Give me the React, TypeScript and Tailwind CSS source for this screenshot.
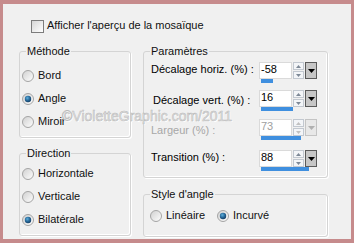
import React, { useId } from "react";

const Radio = ({ checked }: { checked?: boolean }) => {
  const id = useId().replace(/:/g, "");
  return (
    <svg width="12" height="12" viewBox="0 0 12 12" className="shrink-0">
      <defs>
        <linearGradient id={`g${id}`} x1="0" y1="0" x2="1" y2="1">
          <stop offset="0" stopColor="#cfcfcf" />
          <stop offset="1" stopColor="#ffffff" />
        </linearGradient>
        <radialGradient id={`d${id}`} cx="40%" cy="35%" r="70%">
          <stop offset="0" stopColor="#5fb0dc" />
          <stop offset="0.5" stopColor="#2a6d9e" />
          <stop offset="1" stopColor="#123a60" />
        </radialGradient>
      </defs>
      <circle cx="6" cy="6" r="5.5" fill={`url(#g${id})`} stroke="#a4a4a4" strokeWidth="1" />
      {checked && <circle cx="6" cy="6" r="3.2" fill={`url(#d${id})`} />}
    </svg>
  );
};

const RadioRow = ({ label, checked }: { label: string; checked?: boolean }) => (
  <div className="flex h-[23px] items-center gap-[4px]">
    <Radio checked={checked} />
    <span>{label}</span>
  </div>
);

const GroupBox = ({
  title,
  className,
  children,
}: {
  title: string;
  className: string;
  children: React.ReactNode;
}) => (
  <div
    className={`relative rounded-[3px] border border-[#d4d4d4] shadow-[inset_-1px_-1px_0_#ffffff,1px_1px_0_#ffffff] ${className}`}
  >
    <span className="absolute left-[6px] top-[-7px] bg-[#f0f0f0] px-[1px] leading-[13px]">{title}</span>
    {children}
  </div>
);

const Tri = ({ up, color }: { up?: boolean; color: string }) => (
  <svg width="5" height="3" viewBox="0 0 5 3">
    <polygon points={up ? "0,3 5,3 2.5,0" : "0,0 5,0 2.5,3"} fill={color} />
  </svg>
);

const Spin = ({
  value,
  pct,
  disabled,
}: {
  value: string;
  pct: number;
  disabled?: boolean;
}) => (
  <div className="flex flex-col">
    <div className="flex h-[17px]">
      <div
        className={`w-[33px] border border-[#dadada] bg-white pl-[1px] pt-[1px] leading-[10px] ${
          disabled ? "text-[#a0a0a0]" : "text-black"
        }`}
      >
        {value}
      </div>
      <div className="ml-[1px] flex w-[11px] flex-col gap-[1px]">
        <div className="flex flex-1 items-center justify-center border border-[#c2c8d0] bg-[#f3f5f8]">
          <Tri up color={disabled ? "#c0c0c0" : "#7d8896"} />
        </div>
        <div className="flex flex-1 items-center justify-center border border-[#c2c8d0] bg-[#f3f5f8]">
          <Tri color={disabled ? "#c0c0c0" : "#7d8896"} />
        </div>
      </div>
      <div
        className={`ml-[1px] flex w-[12px] items-center justify-center border ${
          disabled ? "border-[#c4c4c4] bg-[#e8e8e8]" : "border-[#5a5a5a] bg-[#c6c6c6]"
        }`}
      >
        <svg width="7" height="4" viewBox="0 0 7 4">
          <polygon points="0,0 7,0 3.5,4" fill={disabled ? "#b0b0b0" : "#000000"} />
        </svg>
      </div>
    </div>
    <div className="ml-[2px] h-[4px] w-[55px]">
      <div className="h-full bg-[#3f8fdf]" style={{ width: `${pct * 55}px` }} />
    </div>
  </div>
);

const ParamRow = ({
  label,
  value,
  pct,
  disabled,
  labelPt,
  mt,
}: {
  label: string;
  value: string;
  pct: number;
  disabled?: boolean;
  labelPt: string;
  mt: string;
}) => (
  <div className={`flex ${mt}`}>
    <div className={`w-[108px] ${labelPt} ${disabled ? "text-[#a7a7a7]" : "text-black"}`}>{label}</div>
    <Spin value={value} pct={pct} disabled={disabled} />
  </div>
);

export default function App() {
  return (
    <div className="relative h-[243px] w-[354px] border-b-4 border-l-[3px] border-r-[3px] border-t-4 border-[#c68b8c] bg-[#f0f0f0] font-['Liberation_Sans',Arial,sans-serif] text-[11px] leading-[13px] text-[#111111]">
      <div className="flex items-center gap-[3px] pl-[28px] pt-[16px]">
        <div className="h-[13px] w-[13px] border border-[#7c7c7c] bg-gradient-to-br from-[#d6d6d6] to-[#ffffff]" />
        <span className="-mt-[2px]">Afficher l'aperçu de la mosaïque</span>
      </div>

      <div className="mt-[18px] flex gap-[12px] pl-[16px]">
        <div className="flex w-[112px] flex-col">
          <GroupBox title="Méthode" className="h-[87px] pl-[2px] pt-[12px]">
            <RadioRow label="Bord" />
            <RadioRow label="Angle" checked />
            <RadioRow label="Miroir" />
          </GroupBox>
          <GroupBox title="Direction" className="mt-[15px] h-[83px] pl-[2px] pt-[8px]">
            <RadioRow label="Horizontale" />
            <RadioRow label="Verticale" />
            <RadioRow label="Bilatérale" checked />
          </GroupBox>
        </div>

        <div className="flex w-[185px] flex-col">
          <GroupBox title="Paramètres" className="h-[127px] pl-[7px] pt-[10px]">
            <ParamRow label="Décalage horiz. (%) :" value="-58" pct={0.21} labelPt="pt-[1px]" mt="" />
            <ParamRow label="Décalage vert. (%) :" value="16" pct={0.58} labelPt="pt-[4px] pl-[2px]" mt="mt-[7px]" />
            <ParamRow label="Largeur (%) :" value="73" pct={0.73} disabled labelPt="pt-[5px]" mt="mt-[8px]" />
            <ParamRow label="Transition (%) :" value="88" pct={0.88} labelPt="pt-[1px]" mt="mt-[10px]" />
          </GroupBox>
          <GroupBox title="Style d'angle" className="mt-[16px] flex h-[43px] items-start pl-[6px] pt-[9px]">
            <div className="w-[67px]">
              <RadioRow label="Linéaire" />
            </div>
            <RadioRow label="Incurvé" checked />
          </GroupBox>
        </div>
      </div>

      <div className="pointer-events-none absolute left-[59px] top-[105px] whitespace-nowrap text-[14px] leading-[14px] text-[#e4e4e4] [-webkit-text-stroke:0.5px_#b8b8b8] [text-shadow:1px_1px_0_#ffffff]">
        ©VioletteGraphic.com/2011
      </div>
    </div>
  );
}
